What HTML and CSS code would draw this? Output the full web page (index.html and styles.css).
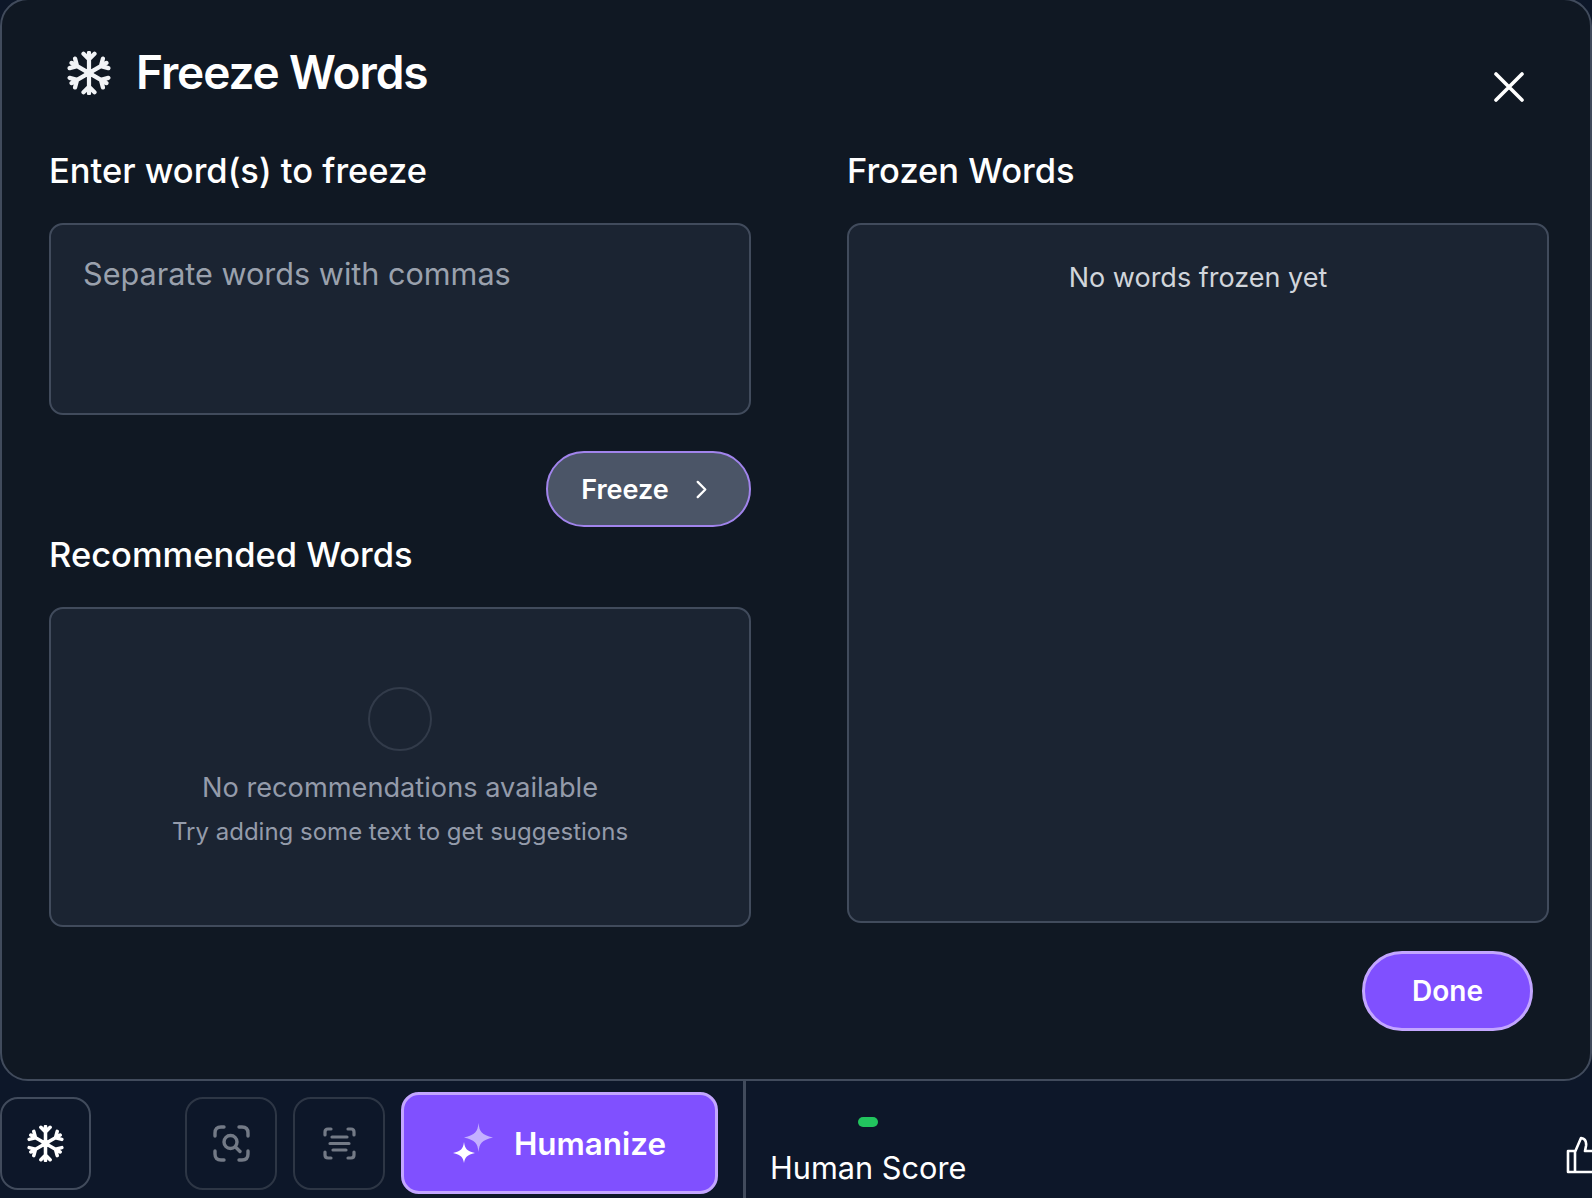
FILE: index.html
```html
<!DOCTYPE html>
<html>
<head>
	<title>Freeze Words</title>
	<meta charset="utf-8"/>
	<link rel="stylesheet" href="styles.css">
</head>
<body>
<svg class="defs" width="0" height="0">
	<symbol id="flake" viewBox="-12 -12 24 24">
		<g fill="none" stroke="currentColor" stroke-width="2.3" stroke-linecap="round" stroke-linejoin="round">
			<path d="M0 -11V11M-3 -10.500L0 -7.500L3 -10.500M-3 10.500L0 7.500L3 10.500"/>
			<path transform="rotate(60)" d="M0 -11V11M-3 -10.500L0 -7.500L3 -10.500M-3 10.500L0 7.500L3 10.500"/>
			<path transform="rotate(120)" d="M0 -11V11M-3 -10.500L0 -7.500L3 -10.500M-3 10.500L0 7.500L3 10.500"/>
		</g>
		<circle r="2.500" fill="currentColor"/>
	</symbol>
</svg>

<div class="modal">
	<div class="modal-head">
		<div class="modal-title">
			<svg class="title-icon"><use href="#flake"/></svg>
			<h1>Freeze Words</h1>
		</div>
		<svg class="close" viewBox="0 0 30 30" fill="none" stroke="#fff" stroke-width="3.6" stroke-linecap="round">
			<path d="M2 2L28 28M28 2L2 28"/>
		</svg>
	</div>
	<div class="columns">
		<div class="col">
			<h2>Enter word(s) to freeze</h2>
			<div class="box word-input">Separate words with commas</div>
			<div class="freeze-row">
				<button class="btn-freeze">Freeze
					<svg viewBox="0 0 12 20" fill="none" stroke="#fff" stroke-width="2.400" stroke-linecap="round" stroke-linejoin="round"><path d="M2 2L10 10L2 18"/></svg>
				</button>
			</div>
			<h2 class="rec-title">Recommended Words</h2>
			<div class="box rec-box">
				<div class="empty-circle"></div>
				<div class="rec-main">No recommendations available</div>
				<div class="rec-sub">Try adding some text to get suggestions</div>
			</div>
		</div>
		<div class="col">
			<h2>Frozen Words</h2>
			<div class="box frozen-box">No words frozen yet</div>
			<div class="done-row"><button class="btn-done">Done</button></div>
		</div>
	</div>
</div>

<div class="bar">
	<div class="tools">
		<div class="tool tool-flake"><svg><use href="#flake"/></svg></div>
		<div class="tool tool-scan">
			<svg viewBox="0 0 37 37" fill="none" stroke="#737a86" stroke-width="3.400" stroke-linecap="round" stroke-linejoin="round">
				<path d="M2 11V8Q2 2 8 2H11M26 2H29Q35 2 35 8V11M35 26V29Q35 35 29 35H26M11 35H8Q2 35 2 29V26"/>
				<circle cx="17.500" cy="17" r="6.500"/>
				<path d="M22.500 22L27 26.500"/>
			</svg>
		</div>
		<div class="tool tool-text">
			<svg viewBox="0 0 33 33" fill="none" stroke="#737a86" stroke-width="3.200" stroke-linecap="round" stroke-linejoin="round">
				<path d="M2 8V5Q2 2 5 2H8M25 2H28Q31 2 31 5V8M31 25V28Q31 31 28 31H25M8 31H5Q2 31 2 28V25"/>
				<path d="M9 10H24M7 16.500H26M10 23H23"/>
			</svg>
		</div>
		<button class="btn-humanize">
			<svg viewBox="0 0 40 40">
				<path fill="#c4b0ff" d="M25.500 0C26.500 9 28.500 11.500 40 14.500C28.500 17.500 26.500 20 25.500 29C24.500 20 22.500 17.500 11 14.500C22.500 11.500 24.500 9 25.500 0Z"/>
				<path fill="#fff" d="M11 19C12 26 14 28 22 30C14 32 12 34 11 40C10 34 8 32 0 30C8 28 10 26 11 19Z"/>
			</svg>
			<span>Humanize</span>
		</button>
	</div>
	<div class="score">
		<div class="score-col">
			<div class="score-dot"></div>
			<div class="score-label">Human Score</div>
		</div>
		<svg class="thumb" viewBox="0 0 38 38" fill="none" stroke="#fff" stroke-width="2.600" stroke-linejoin="round" stroke-linecap="round">
			<path d="M2 15H9V36H2ZM9 16L15 2Q21 3 20 10L19 15H34V36H9"/>
		</svg>
	</div>
</div>
</body>
</html>
```

FILE: styles.css
```css
* {
	box-sizing: border-box;
}

html, body {
	margin: 0;
	padding: 0;
	height: 1198px;
	overflow: hidden;
	background: #0d1729;
	font-family: Inter, "Noto Sans", sans-serif;
	color: #fff;
}

.defs {
	display: block;
	height: 0;
}

.modal {
	margin-top: -2px;
	height: 1083px;
	background: #101823;
	border: 2px solid #414b5c;
	border-radius: 28px;
	padding: 0 44px 0 47px;
}

.modal-head {
	height: 147px;
	display: flex;
	justify-content: space-between;
	padding: 50px 22px 0 18px;
}

.modal-title {
	display: flex;
	align-items: flex-start;
	gap: 25px;
}

.title-icon {
	width: 44px;
	height: 44px;
	margin-top: 1px;
	color: #f1f3f6;
}

h1 {
	margin: -1px 0 0;
	font-size: 46px;
	line-height: 46px;
	font-weight: 600;
	letter-spacing: -1.1px;
}

.close {
	width: 30px;
	height: 30px;
	margin-top: 22px;
}

.columns {
	display: grid;
	grid-template-columns: 702px 702px;
	gap: 96px;
}

h2 {
	margin: 0;
	height: 76px;
	font-size: 34.500px;
	line-height: 48px;
	font-weight: 500;
}

.box {
	background: #1b2432;
	border: 2px solid #414b5c;
	border-radius: 14px;
}

.word-input {
	height: 192px;
	padding: 29px 32px;
	font-size: 30.600px;
	line-height: 40px;
	color: #9aa1ad;
}

.freeze-row {
	display: flex;
	justify-content: flex-end;
	margin-top: 36px;
}

.btn-freeze {
	width: 205px;
	height: 76px;
	display: flex;
	align-items: center;
	justify-content: center;
	gap: 26px;
	padding: 0 8px 0 0;
	background: #4b5567;
	border: 2px solid #a184ec;
	border-radius: 38px;
	font: 600 27px Inter, sans-serif;
	color: #fff;
}

.btn-freeze svg {
	width: 13px;
	height: 19px;
}

.rec-title {
	margin-top: 4px;
}

.rec-box {
	height: 320px;
	display: flex;
	flex-direction: column;
	align-items: center;
	padding-top: 78px;
	color: #949baa;
}

.empty-circle {
	width: 64px;
	height: 64px;
	border: 2px solid #323b4a;
	border-radius: 50%;
}

.rec-main {
	margin-top: 19px;
	font-size: 27.200px;
	line-height: 36px;
}

.rec-sub {
	margin-top: 10px;
	font-size: 24px;
	line-height: 32px;
}

.frozen-box {
	height: 700px;
	padding-top: 35px;
	text-align: center;
	font-size: 27px;
	line-height: 36px;
	color: #d1d5db;
}

.done-row {
	display: flex;
	justify-content: flex-end;
	margin-top: 28px;
	padding-right: 16px;
}

.btn-done {
	width: 171px;
	height: 80px;
	background: #8050ff;
	border: 3px solid #c3a6ff;
	border-radius: 40px;
	font: 600 28px Inter, sans-serif;
	color: #fff;
}

.bar {
	height: 117px;
	display: flex;
}

.tools {
	flex: none;
	width: 743px;
	height: 113px;
	display: flex;
	align-items: center;
	padding-top: 11px;
}

.tool {
	width: 92px;
	height: 93px;
	display: flex;
	align-items: center;
	justify-content: center;
	border: 2px solid #2d3645;
	border-radius: 18px;
	margin-right: 16px;
}

.tool-flake {
	width: 91px;
	margin-right: 94px;
	border-color: #414b5c;
	color: #fff;
}

.tool-flake svg {
	width: 37px;
	height: 37px;
}

.tool-scan svg {
	width: 37px;
	height: 37px;
}

.tool-text svg {
	width: 33px;
	height: 33px;
}

.btn-humanize {
	width: 317px;
	height: 102px;
	display: flex;
	align-items: center;
	justify-content: center;
	gap: 21px;
	padding: 0;
	background: #8050ff;
	border: 3px solid #c3a6ff;
	border-radius: 18px;
	font: 600 31.400px Inter, sans-serif;
	color: #fff;
}

.btn-humanize svg {
	width: 40px;
	height: 40px;
}

.btn-humanize span {
	margin-top: 2px;
}

.score {
	flex: 1;
	display: flex;
	justify-content: space-between;
	border-left: 3px solid #414b5c;
	padding-left: 24px;
	min-width: 0;
	overflow: hidden;
}

.score-col {
	display: flex;
	flex-direction: column;
	align-items: center;
	padding-top: 36px;
}

.score-dot {
	width: 20px;
	height: 10px;
	border-radius: 5px;
	background: #22c55e;
}

.score-label {
	margin-top: 21px;
	font-size: 30.700px;
	line-height: 40px;
}

.thumb {
	flex: none;
	width: 38px;
	height: 38px;
	margin-top: 55px;
	margin-right: -12px;
}
```
